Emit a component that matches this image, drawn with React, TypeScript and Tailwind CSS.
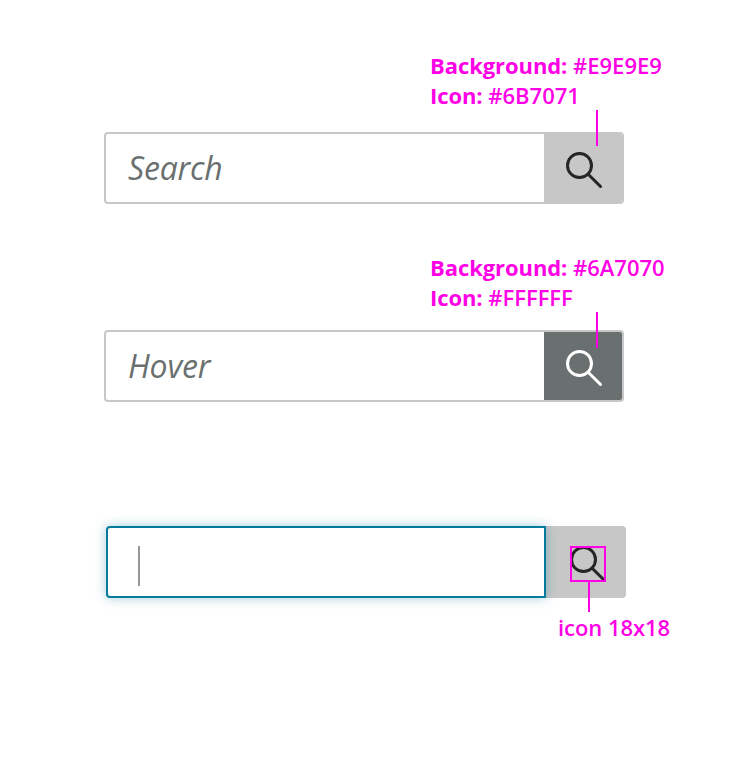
type Tone = 'default' | 'hover';

function SearchIcon({ className }: { className: string }) {
  return (
    <svg className={className} width="36" height="36" viewBox="0 0 36 36" fill="none" stroke="currentColor" strokeWidth="3" strokeLinecap="round">
      <circle cx="13.5" cy="13.5" r="12" />
      <path d="M22.2 22.2 34.5 34.5" />
    </svg>
  );
}

function Spec({ background, icon }: { background: string; icon: string }) {
  return (
    <div className="relative ml-[430px] h-[60px] whitespace-nowrap text-[22px] leading-[30px] font-semibold text-[#ff00e6]">
      <p>
        <b className="font-bold tracking-[-0.08px]">Background:</b> {background}
      </p>
      <p>
        <b className="font-bold tracking-[-0.08px]">Icon:</b> {icon}
      </p>
      <span className="absolute top-[60px] left-[166px] z-10 h-9 w-0.5 bg-[#ff00e6]" />
    </div>
  );
}

function SearchField({ placeholder, tone }: { placeholder: string; tone: Tone }) {
  return (
    <div className="ml-[104px] flex h-[72px] w-[520px] overflow-hidden rounded-[4px] border-2 border-[#c7c7c7]">
      <div className="flex w-[438px] items-center pl-[22px] text-[32px] leading-none tracking-[-0.2px] text-[#6a7070] italic">{placeholder}</div>
      <div className={tone === 'hover' ? 'flex-1 bg-[#6a7070] pt-[18px] pl-[22px] text-white' : 'flex-1 bg-[#c7c7c7] pt-[18px] pl-[22px] text-[#252525]'}>
        <SearchIcon className="block" />
      </div>
    </div>
  );
}

export default function App() {
  return (
    <main className="flex h-[758px] w-[740px] flex-col bg-white pt-[50px] font-['Open_Sans','Noto_Sans',sans-serif]">
      <Spec background="#E9E9E9" icon="#6B7071" />
      <div className="mt-[22px]">
        <SearchField placeholder="Search" tone="default" />
      </div>
      <div className="mt-[48px]">
        <Spec background="#6A7070" icon="#FFFFFF" />
      </div>
      <div className="mt-[18px]">
        <SearchField placeholder="Hover" tone="hover" />
      </div>
      <div className="mt-[124px] ml-[106px] flex h-[72px] w-[520px]">
        <div className="z-10 w-[440px] rounded-l-[4px] border-2 border-[#047a9c] bg-white pt-[18px] pl-[30px] shadow-[0_0_12px_rgba(4,122,156,0.36)]">
          <div className="h-10 w-0.5 bg-[#979797]" />
        </div>
        <div className="w-20 rounded-r-[4px] bg-[#c7c7c7] pt-5 pl-6">
          <div className="relative size-9">
            <SearchIcon className="block text-[#252525]" />
            <span className="absolute inset-0 border-2 border-[#ff00e6]" />
            <span className="absolute top-9 left-[18px] h-[30px] w-0.5 bg-[#ff00e6]" />
          </div>
        </div>
      </div>
      <p className="mt-[14px] ml-[558px] text-[22px] leading-[30px] font-semibold tracking-[-0.05px] whitespace-nowrap text-[#ff00e6]">icon 18x18</p>
    </main>
  );
}
